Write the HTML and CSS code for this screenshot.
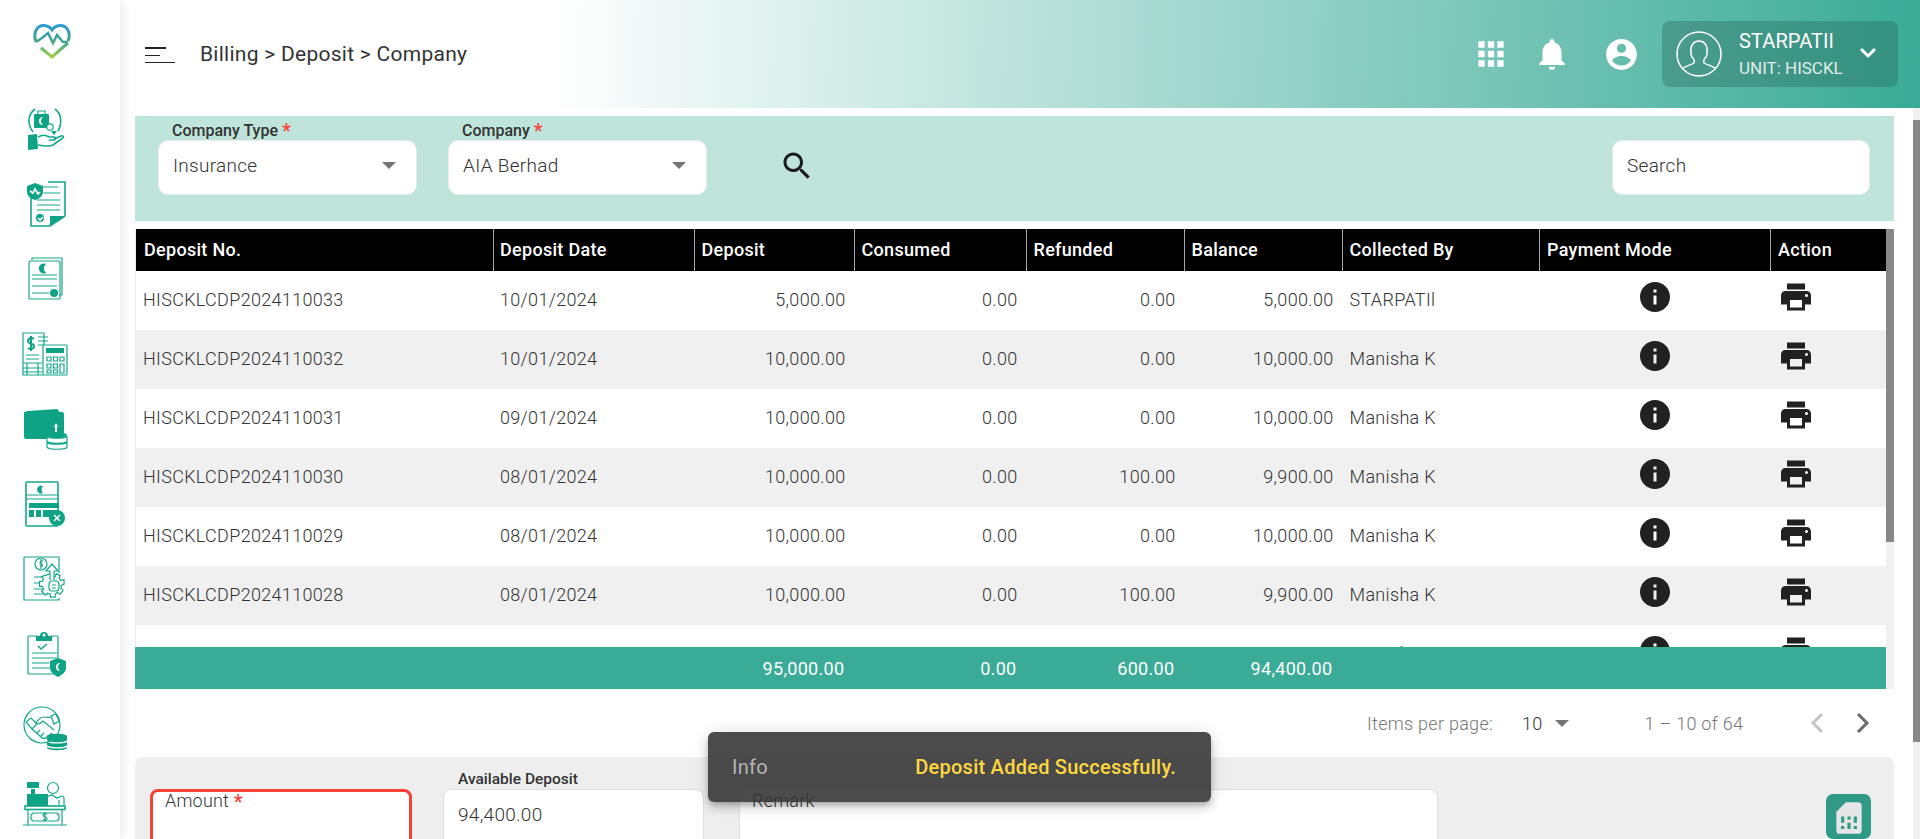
FILE: index.html
```html
<!DOCTYPE html>
<html lang="en">
<head>
<meta charset="utf-8">
<title>Billing - Deposit - Company</title>
<link rel="stylesheet" href="styles.css">
</head>
<body>
<div class="app">
  <aside class="sidebar">
    <div class="logo">
      <svg width="38" height="36" viewBox="0 0 38 36" fill="none">
        <defs><linearGradient id="lg" gradientUnits="userSpaceOnUse" x1="0" y1="0" x2="0" y2="34"><stop offset="0" stop-color="#2b9ad8"/><stop offset=".5" stop-color="#46a394"/><stop offset=".8" stop-color="#7fbf6a"/><stop offset="1" stop-color="#a8d13c"/></linearGradient></defs>
        <path d="M3 18C0 10 3 2 10 1.500C14 1.300 17 3 19 6C21 3 24 1.300 28 1.500C35 2 38 10 35 17" stroke="url(#lg)" stroke-width="3"/>
        <path d="M3 18L9 14L15 9L20 19L24 11L30 18H35" stroke="url(#lg)" stroke-width="2.6"/>
        <path d="M8 24L19 33L35 19" stroke="url(#lg)" stroke-width="3.2"/>
      </svg>
    </div>
    <nav class="nav">
      <a class="nav-item"><svg class="nav-icon" viewBox="0 0 46 46">
        <path class="ln th" d="M13 3C6 8 5 18 11 26M33 3C40 8 40 18 36 25"/>
        <rect class="fl" x="12" y="8" width="15" height="14" rx="1"/><path class="ln" d="M16 8V5h7v3"/>
        <path class="wt" d="M21 11a4 4 0 1 0 0 8a5 5 0 0 1 0-8z"/>
        <circle class="ln wfill" cx="28" cy="21" r="3.200"/><path class="fl" d="M29 25h6l-3 4z"/>
        <path class="fl" d="M6 29l9-1 1 15-10 1z"/>
        <path class="ln th" d="M16 31c5-3 8-2 11 0h5c2 0 2 3 0 3h-5M32 33l7-3c2-1 3 1 2 2l-10 7c-4 2-10 1-15 0"/>
      </svg></a>
      <a class="nav-item"><svg class="nav-icon" viewBox="0 0 46 46">
        <path class="ln th" d="M26 1h17v34M9 17v28h19l15-10"/>
        <path class="ln" d="M20 6h16M22 12h16M15 19h23M15 24h23M15 29h23"/>
        <circle class="fl" cx="18" cy="37" r="4"/><path class="wl" d="M16 37l2 2 3-3"/>
        <path class="fl" d="M28 45l15-10H28z"/>
        <path class="fl" d="M5 5l8-3 8 3v6c0 4-4 7-8 8-4-1-8-4-8-8z"/><path class="wl" d="M8 10l3 2 2-4 3 5 2-2"/>
      </svg></a>
      <a class="nav-item"><svg class="nav-icon" viewBox="0 0 46 46">
        <path class="ln" d="M10 4V2h30v37h-3"/><rect class="ln" x="7" y="5" width="31" height="38" rx="1"/>
        <path class="fl" d="M24 8a5 5 0 1 0 0 9a6 6 0 0 1 0-9z"/><path class="ln" d="M10 19h25M10 23h25M10 30h25M10 37h17"/>
        <circle class="fl" cx="32" cy="37" r="4"/>
      </svg></a>
      <a class="nav-item"><svg class="nav-icon" viewBox="0 0 46 46">
        <path class="ln" d="M1 30V2h21v12M1 30v14h20"/>
        <path class="fl2" d="M12 8c-2-2-6-1-6 2s6 2 6 5-4 4-6 2M9 5v15"/><path class="ln" d="M16 6h10M16 10h10M16 14h6M4 24h13M4 28h13M1 32h19M1 37h19M1 41h19M5 32v12M16 32v12"/>
        <rect class="ln wfill" x="21" y="14" width="24" height="30" rx="1"/><rect class="fl" x="24" y="17" width="18" height="5"/>
        <path class="ln" d="M25 26h4v4h-4zM31.500 26h4v4h-4zM38 26h4v4h-4zM25 33h4v4h-4zM31.500 33h4v4h-4zM25 39h4v3h-4zM31.500 39h4v3h-4zM38 33h4v9h-4z"/>
      </svg></a>
      <a class="nav-item"><svg class="nav-icon" viewBox="0 0 46 46">
        <path class="fl" d="M6 5l29-2 2 2v2H2c0-1 2-2 4-2z"/>
        <path class="fl" d="M2 6h38a2 2 0 0 1 2 2v26H25v-1H4a2 2 0 0 1-2-2z"/>
        <path class="wt" d="M34 17l2 4h-1v5h-2v-5h-1z"/>
        <ellipse class="fl" cx="35" cy="29" rx="10" ry="3"/>
        <path class="ln wfill" d="M25 30c1 3 19 3 20 0v5c-1 3-19 3-20 0zM25 36c1 3 19 3 20 0v5c-1 3-19 3-20 0z"/>
      </svg></a>
      <a class="nav-item"><svg class="nav-icon" viewBox="0 0 46 46">
        <rect class="ln th" x="4" y="1" width="32" height="44" rx="1"/>
        <path class="fl" d="M21 5a4 4 0 1 0 0 7a5 5 0 0 1 0-7z"/><path class="ln" d="M4 14h32M4 18h32"/>
        <path class="fl" d="M7 22h30v5H7zM7 29h5v7H7zM14 29h5v7h-5zM21 29h14v7H21z"/>
        <circle class="fl" cx="35" cy="37" r="8"/><path class="wl" d="M32 34l6 6M38 34l-6 6"/>
      </svg></a>
      <a class="nav-item"><svg class="nav-icon" viewBox="0 0 46 46">
        <path class="ln" d="M2 1h35v16M2 1v43h35v-2"/><circle class="ln" cx="19" cy="8" r="6"/><path class="ln" d="M21 5c-3-1-4 3-2 3s2 3-1 3M19 3v10"/>
        <path class="ln" d="M12 21h10M12 27h8M12 33h10M12 38h14"/>
        <path class="ln wfill" d="M33 18l2 3h3l1-3 4 2-1 3 2 2 3-1 0 5-3 1 0 3 2 2-3 4-3-2-2 2v3h-5v-3l-3-1-2 2-4-4 2-2-1-3h-3v-5h3l1-3-2-2z" transform="translate(-4 0) scale(.98)"/>
        <rect class="ln" x="27" y="25" width="10" height="10" rx="3"/><path class="ln" d="M30 29h4M30 32h4"/>
        <path class="ln wfill" d="M32 24v-9h4l-6-7-6 7h4v9"/>
      </svg></a>
      <a class="nav-item"><svg class="nav-icon" viewBox="0 0 46 46">
        <path class="ln" d="M16 5H7a1 1 0 0 0-1 1v36a1 1 0 0 0 1 1h30M29 5h6a1 1 0 0 1 1 1v22"/>
        <path class="fl" d="M14 5h4a4 4 0 0 1 8 0h4v5H14z"/><circle class="wt" cx="22" cy="4" r="1.500"/>
        <path class="ln th" d="M16 15l3 3 6-5"/><path class="ln" d="M10 22h25M10 27h25M10 32h17M10 37h18"/>
        <path class="fl" d="M36 27l8 3v7c0 4-4 7-8 9-4-2-8-5-8-9v-7z"/>
        <path class="wt" d="M38 32a4 4 0 1 0 0 8a5 5 0 0 1 0-8z"/>
      </svg></a>
      <a class="nav-item"><svg class="nav-icon" viewBox="0 0 46 46">
        <circle class="ln" cx="20" cy="19" r="18"/>
        <path class="ln" d="M4 16l5-4 6 6-5 5zM29 10l5-2 3 7-5 3z"/>
        <path class="ln" d="M29 11c-3 1-5 0-8 0-3 0-5 3-7 6 2 2 5 0 7-2l11 9"/>
        <path class="ln" d="M10 23l9 8c2 2 4 2 6 0l5-4M15 27l3-3M19 30l3-3"/>
        <path class="fl" d="M25 30c1-3 19-3 20 0v4c-1 3-19 3-20 0zM25 36c4 2 16 2 20 0v3c-1 3-19 3-20 0zM25 41c4 2 16 2 20 0v1c-1 3-19 3-20 0z"/>
      </svg></a>
      <a class="nav-item"><svg class="nav-icon" viewBox="0 0 46 46">
        <rect class="fl" x="5" y="1" width="12" height="6"/><rect class="fl" x="9" y="8" width="4" height="6"/><path class="fl" d="M5 13h21v12H5z"/>
        <circle class="ln" cx="31" cy="7" r="5.500"/>
        <path class="ln" d="M24 24v-8l6-2 5 3 5-2c2 0 2 1 2 3v6M37 19v5"/>
        <rect class="ln th" x="3" y="25" width="40" height="3.500"/>
        <path class="ln" d="M6 29v15M40 29v15M1 44h44"/>
        <path class="ln" d="M11 32h24l2 2v4l-2 2H11l-2-2v-4z"/>
        <path class="ln" d="M25 33c-2-1-4 0-4 1.500s4 1 4 3-3 2-4 1M23 31v9"/>
      </svg></a>
    </nav>
  </aside>

  <div class="main">
    <header class="header">
      <button class="menu-btn" aria-label="Menu"><span class="bar bar-a"></span><span class="bar bar-b"></span><span class="bar bar-c"></span></button>
      <div class="crumbs">Billing &gt; Deposit &gt; Company</div>
      <div class="header-tools">
        <svg class="tool tool-apps" viewBox="0 0 24 24"><path d="M4 8h4V4H4v4zm6 12h4v-4h-4v4zm-6 0h4v-4H4v4zm0-6h4v-4H4v4zm6 0h4v-4h-4v4zm6-10v4h4V4h-4zm-6 4h4V4h-4v4zm6 6h4v-4h-4v4zm0 6h4v-4h-4v4z"/></svg>
        <svg class="tool tool-bell" viewBox="0 0 24 24"><path d="M12 22c1.100 0 2-.9 2-2h-4c0 1.100.89 2 2 2zm6-6v-5c0-3.070-1.640-5.640-4.500-6.320V4c0-.83-.67-1.500-1.500-1.500s-1.500.67-1.500 1.500v.68C7.630 5.360 6 7.920 6 11v5l-2 2v1h16v-1l-2-2z"/></svg>
        <svg class="tool tool-user" viewBox="0 0 24 24"><path d="M12 2C6.480 2 2 6.480 2 12s4.480 10 10 10 10-4.480 10-10S17.520 2 12 2zm0 3c1.660 0 3 1.340 3 3s-1.340 3-3 3-3-1.340-3-3 1.340-3 3-3zm0 14.200c-2.500 0-4.710-1.280-6-3.220.03-1.990 4-3.080 6-3.080 1.990 0 5.970 1.090 6 3.080-1.290 1.940-3.500 3.220-6 3.220z"/></svg>
        <div class="user-box">
          <svg class="avatar" viewBox="0 0 46 46" fill="none"><circle cx="23" cy="23" r="22"/><path d="M6 38c3-3 9-4 12-6 1-2 0-3-1-5-2-1-2-3-2-5-1-8 3-12 8-12s9 4 8 12c0 2 0 4-2 5-1 2-2 3-1 5 3 2 9 3 12 6"/></svg>
          <div class="user-text"><div class="user-name">STARPATIl</div><div class="user-unit">UNIT: HISCKL</div></div>
          <svg class="chev" viewBox="0 0 18 12" fill="none"><path d="M2 2l7 7 7-7"/></svg>
        </div>
      </div>
    </header>

    <div class="body-row">
      <div class="page">
        <section class="filters">
          <div class="field field-select">
            <label class="float">Company Type <i>*</i></label>
            <span class="value">Insurance</span><span class="caret"></span>
          </div>
          <div class="field field-select">
            <label class="float">Company <i>*</i></label>
            <span class="value">AIA Berhad</span><span class="caret"></span>
          </div>
          <svg class="search-icon" viewBox="0 0 24 24"><path d="M15.500 14h-.79l-.28-.27C15.410 12.590 16 11.110 16 9.500 16 5.910 13.090 3 9.500 3S3 5.910 3 9.500 5.910 16 9.500 16c1.610 0 3.090-.59 4.230-1.570l.27.28v.79l5 4.990L20.490 19l-4.990-5zm-6 0C7.010 14 5 11.990 5 9.500S7.010 5 9.500 5 14 7.010 14 9.500 11.990 14 9.500 14z"/></svg>
          <div class="field field-search"><span class="value">Search</span></div>
        </section>

        <section class="table-wrap">
          <div class="table-col">
            <div class="rows">
              <div class="row head"><div>Deposit No.</div><div>Deposit Date</div><div>Deposit</div><div>Consumed</div><div>Refunded</div><div>Balance</div><div>Collected By</div><div>Payment Mode</div><div>Action</div></div>
              <div class="row"><div>HISCKLCDP2024110033</div><div>10/01/2024</div><div class="num">5,000.00</div><div class="num">0.00</div><div class="num">0.00</div><div class="num">5,000.00</div><div>STARPATIl</div><div class="ic-pay"><svg class="ic" viewBox="0 0 24 24"><path d="M12 2C6.480 2 2 6.480 2 12s4.480 10 10 10 10-4.480 10-10S17.520 2 12 2zm1 15h-2v-6h2v6zm0-8h-2V7h2v2z"/></svg></div><div class="ic-act"><svg class="ic" viewBox="0 0 24 24"><path d="M19 8H5c-1.660 0-3 1.340-3 3v6h4v4h12v-4h4v-6c0-1.660-1.340-3-3-3zm-3 11H8v-5h8v5zm3-7c-.55 0-1-.45-1-1s.45-1 1-1 1 .45 1 1-.45 1-1 1zm-1-9H6v4h12V3z"/></svg></div></div>
              <div class="row alt"><div>HISCKLCDP2024110032</div><div>10/01/2024</div><div class="num">10,000.00</div><div class="num">0.00</div><div class="num">0.00</div><div class="num">10,000.00</div><div>Manisha K</div><div class="ic-pay"><svg class="ic" viewBox="0 0 24 24"><path d="M12 2C6.480 2 2 6.480 2 12s4.480 10 10 10 10-4.480 10-10S17.520 2 12 2zm1 15h-2v-6h2v6zm0-8h-2V7h2v2z"/></svg></div><div class="ic-act"><svg class="ic" viewBox="0 0 24 24"><path d="M19 8H5c-1.660 0-3 1.340-3 3v6h4v4h12v-4h4v-6c0-1.660-1.340-3-3-3zm-3 11H8v-5h8v5zm3-7c-.55 0-1-.45-1-1s.45-1 1-1 1 .45 1 1-.45 1-1 1zm-1-9H6v4h12V3z"/></svg></div></div>
              <div class="row"><div>HISCKLCDP2024110031</div><div>09/01/2024</div><div class="num">10,000.00</div><div class="num">0.00</div><div class="num">0.00</div><div class="num">10,000.00</div><div>Manisha K</div><div class="ic-pay"><svg class="ic" viewBox="0 0 24 24"><path d="M12 2C6.480 2 2 6.480 2 12s4.480 10 10 10 10-4.480 10-10S17.520 2 12 2zm1 15h-2v-6h2v6zm0-8h-2V7h2v2z"/></svg></div><div class="ic-act"><svg class="ic" viewBox="0 0 24 24"><path d="M19 8H5c-1.660 0-3 1.340-3 3v6h4v4h12v-4h4v-6c0-1.660-1.340-3-3-3zm-3 11H8v-5h8v5zm3-7c-.55 0-1-.45-1-1s.45-1 1-1 1 .45 1 1-.45 1-1 1zm-1-9H6v4h12V3z"/></svg></div></div>
              <div class="row alt"><div>HISCKLCDP2024110030</div><div>08/01/2024</div><div class="num">10,000.00</div><div class="num">0.00</div><div class="num">100.00</div><div class="num">9,900.00</div><div>Manisha K</div><div class="ic-pay"><svg class="ic" viewBox="0 0 24 24"><path d="M12 2C6.480 2 2 6.480 2 12s4.480 10 10 10 10-4.480 10-10S17.520 2 12 2zm1 15h-2v-6h2v6zm0-8h-2V7h2v2z"/></svg></div><div class="ic-act"><svg class="ic" viewBox="0 0 24 24"><path d="M19 8H5c-1.660 0-3 1.340-3 3v6h4v4h12v-4h4v-6c0-1.660-1.340-3-3-3zm-3 11H8v-5h8v5zm3-7c-.55 0-1-.45-1-1s.45-1 1-1 1 .45 1 1-.45 1-1 1zm-1-9H6v4h12V3z"/></svg></div></div>
              <div class="row"><div>HISCKLCDP2024110029</div><div>08/01/2024</div><div class="num">10,000.00</div><div class="num">0.00</div><div class="num">0.00</div><div class="num">10,000.00</div><div>Manisha K</div><div class="ic-pay"><svg class="ic" viewBox="0 0 24 24"><path d="M12 2C6.480 2 2 6.480 2 12s4.480 10 10 10 10-4.480 10-10S17.520 2 12 2zm1 15h-2v-6h2v6zm0-8h-2V7h2v2z"/></svg></div><div class="ic-act"><svg class="ic" viewBox="0 0 24 24"><path d="M19 8H5c-1.660 0-3 1.340-3 3v6h4v4h12v-4h4v-6c0-1.660-1.340-3-3-3zm-3 11H8v-5h8v5zm3-7c-.55 0-1-.45-1-1s.45-1 1-1 1 .45 1 1-.45 1-1 1zm-1-9H6v4h12V3z"/></svg></div></div>
              <div class="row alt"><div>HISCKLCDP2024110028</div><div>08/01/2024</div><div class="num">10,000.00</div><div class="num">0.00</div><div class="num">100.00</div><div class="num">9,900.00</div><div>Manisha K</div><div class="ic-pay"><svg class="ic" viewBox="0 0 24 24"><path d="M12 2C6.480 2 2 6.480 2 12s4.480 10 10 10 10-4.480 10-10S17.520 2 12 2zm1 15h-2v-6h2v6zm0-8h-2V7h2v2z"/></svg></div><div class="ic-act"><svg class="ic" viewBox="0 0 24 24"><path d="M19 8H5c-1.660 0-3 1.340-3 3v6h4v4h12v-4h4v-6c0-1.660-1.340-3-3-3zm-3 11H8v-5h8v5zm3-7c-.55 0-1-.45-1-1s.45-1 1-1 1 .45 1 1-.45 1-1 1zm-1-9H6v4h12V3z"/></svg></div></div>
              <div class="row"><div></div><div></div><div></div><div></div><div></div><div></div><div>Manisha K</div><div class="ic-pay"><svg class="ic" viewBox="0 0 24 24"><path d="M12 2C6.480 2 2 6.480 2 12s4.480 10 10 10 10-4.480 10-10S17.520 2 12 2zm1 15h-2v-6h2v6zm0-8h-2V7h2v2z"/></svg></div><div class="ic-act"><svg class="ic" viewBox="0 0 24 24"><path d="M19 8H5c-1.660 0-3 1.340-3 3v6h4v4h12v-4h4v-6c0-1.660-1.340-3-3-3zm-3 11H8v-5h8v5zm3-7c-.55 0-1-.45-1-1s.45-1 1-1 1 .45 1 1-.45 1-1 1zm-1-9H6v4h12V3z"/></svg></div></div>
            </div>
            <div class="row foot"><div></div><div></div><div class="num">95,000.00</div><div class="num">0.00</div><div class="num">600.00</div><div class="num">94,400.00</div><div></div><div></div><div></div></div>
          </div>
          <div class="table-scroll"><span class="table-thumb"></span></div>
        </section>

        <div class="pager">
          <span class="pg-label">Items per page:</span>
          <span class="pg-size">10</span><span class="caret pg-caret"></span>
          <span class="pg-range">1 – 10 of 64</span>
          <svg class="pg-arrow pg-prev" viewBox="0 0 16 24" fill="none"><path d="M13 3l-9 9 9 9"/></svg>
          <svg class="pg-arrow pg-next" viewBox="0 0 16 24" fill="none"><path d="M3 3l9 9-9 9"/></svg>
        </div>

        <section class="entry">
          <div class="box box-amount"><span class="inner-label">Amount <i>*</i></span></div>
          <div class="box box-avail"><label class="float float-small">Available Deposit</label><span class="value">94,400.00</span></div>
          <div class="box box-remark"><span class="inner-label">Remark</span></div>
          <button class="save-btn" aria-label="Save"><svg viewBox="0 0 24 24"><path d="M19.990 4c0-1.100-.89-2-1.990-2h-8L4 8v12c0 1.100.9 2 2 2h12c1.100 0 2-.9 2-2l-.01-16zM9 19H7v-2h2v2zm8 0h-2v-2h2v2zm-8-4H7v-4h2v4zm4 4h-2v-4h2v4zm0-6h-2v-2h2v2zm4 2h-2v-4h2v4z"/></svg></button>
        </section>
      </div>
      <div class="page-scroll"><span class="page-thumb"></span></div>
    </div>
  </div>

  <div class="toast"><span class="toast-title">Info</span><span class="toast-msg">Deposit Added Successfully.</span></div>
</div>
</body>
</html>
```
FILE: styles.css
```css
* { box-sizing: border-box; }
html, body { margin: 0; height: 100%; overflow: hidden; background: #fff; }
body { font-family: Roboto, "Liberation Sans", sans-serif; color: #404040; }

.app { position: relative; display: flex; height: 839px; width: 1920px; overflow: hidden; }

/* sidebar */
.sidebar { width: 120px; flex: none; background: #fff; box-shadow: 3px 0 9px rgba(60, 60, 110, .09); z-index: 2; }
.logo { height: 91px; padding: 24px 0 0 33px; }
.logo svg { display: block; }
.nav { display: flex; flex-direction: column; }
.nav-item { display: flex; height: 75px; align-items: center; padding-left: 22px; }
.nav-icon { width: 46px; height: 46px; display: block; }
.ln { fill: none; stroke: #14a78b; stroke-width: 1.2; }
.th { stroke-width: 1.6; }
.fl { fill: #0fa386; stroke: none; }
.fl2 { fill: none; stroke: #0fa386; stroke-width: 2; }
.wt { fill: #fff; stroke: none; }
.wl { fill: none; stroke: #fff; stroke-width: 1.6; }
.wfill { fill: #fff; }

/* header */
.main { flex: 1; min-width: 0; display: flex; flex-direction: column; }
.header { height: 108px; flex: none; display: flex; align-items: center; padding: 0 22px 0 25px; background: linear-gradient(92deg, #fff 24%, #3aab96 100%); }
.menu-btn { display: flex; flex-direction: column; width: 30px; height: 18px; margin: 4px 0 0; padding: 0; border: 0; background: none; }
.bar { display: block; height: 1.5px; background: #222; }
.bar-a { width: 21px; }
.bar-b { width: 15px; margin-top: 6px; }
.bar-c { width: 30px; margin-top: 5.5px; }
.crumbs { margin-left: 25px; margin-bottom: 1px; font-size: 21px; color: #333; letter-spacing: .27px; }
.header-tools { margin-left: auto; display: flex; align-items: center; }
.tool { display: block; fill: #fff; }
.tool-apps { width: 38px; height: 38px; }
.tool-bell { width: 38px; height: 38px; margin-left: 23px; }
.tool-user { width: 37px; height: 37px; margin-left: 32px; }
.user-box { display: flex; align-items: center; width: 236px; height: 66px; margin-left: 22px; padding: 0 21px 0 14px; border-radius: 8px; background: rgba(30, 90, 78, .32); }
.avatar { width: 46px; height: 46px; flex: none; stroke: #fff; stroke-width: 1.5; }
.user-text { margin-left: 17px; }
.user-name { font-size: 20px; line-height: 24px; color: #fff; letter-spacing: .1px; }
.user-unit { font-size: 17px; line-height: 22px; margin-top: 4px; color: #e3ece9; }
.chev { width: 18px; height: 12px; margin-left: auto; margin-bottom: 3px; stroke: #fff; stroke-width: 3; }

/* page */
.body-row { flex: 1; min-height: 0; display: flex; }
.page { flex: 1; min-width: 0; padding: 8px 19px 0 15px; overflow: hidden; }
.page-scroll { width: 7px; flex: none; background: #f1f1f1; padding-top: 12px; }
.page-thumb { display: block; height: 622px; background: #888; }

.filters { display: flex; align-items: flex-start; height: 105px; padding: 24px 24px 0 23px; background: #bfe4dc; }
.field { position: relative; height: 55px; border: 1px solid #e6ece9; border-radius: 10px; background: #fff; display: flex; align-items: center; padding: 0 14px 5px; }
.field-select { width: 259px; margin-right: 31px; }
.field-select:nth-child(2) { margin-right: 0; }
.value { font-size: 19px; font-weight: 300; color: #333; letter-spacing: .28px; }
.float { position: absolute; left: 13px; top: -19px; font-size: 16px; line-height: 18px; font-weight: 500; color: #333; }
.float i, .inner-label i { font-style: normal; font-weight: 500; color: #f44336; font-size: 20px; line-height: 14px; vertical-align: -2px; }
.caret { width: 0; height: 0; border: 7px solid transparent; border-top-color: #757575; border-bottom: 0; }
.field-select .caret { margin-left: auto; margin-right: 6px; }
.search-icon { width: 36px; height: 36px; margin: 8px 0 0 72px; fill: #1c1c1c; flex: none; }
.field-search { width: 258px; margin-left: auto; }

/* table */
.table-wrap { display: flex; margin-top: 8px; height: 460px; }
.table-col { flex: 1; min-width: 0; display: flex; flex-direction: column; }
.rows { flex: 1; min-height: 0; overflow: hidden; border-left: 1px solid #ececec; }
.row { display: grid; grid-template-columns: 358px 200.500px 160px 172px 158px 158px 197.500px 231px 1fr; height: 59px; font-size: 18px; font-weight: 300; color: #333; background: #fff; letter-spacing: .32px; }
.row > div { display: flex; align-items: center; padding: 0 7px 2px; }
.row > div:nth-child(2) { padding-left: 6px; }
.row > .num { justify-content: flex-end; padding-right: 9px; }
.alt { background: #f0f0f0; }
.head { height: 42px; background: #000; color: #fff; font-weight: 500; letter-spacing: .3px; }
.head > div { border-right: 1px solid #a9a9a9; }
.head > div:first-child { padding-left: 8px; }
.head > div:last-child { border-right: 0; }
.foot { height: 42px; background: #3aab96; color: #fff; font-weight: 400; flex: none; }
.foot > div { padding-bottom: 0; }
.ic { width: 36px; height: 36px; fill: #212121; display: block; margin-bottom: 8px; }
.row > .ic-pay { justify-content: center; padding: 0; transform: translateX(-1px); }
.row > .ic-act { padding: 0 0 0 7px; }
.table-scroll { width: 8px; flex: none; background: #f0f0f0; }
.table-thumb { display: block; height: 313px; background: #888; }

/* pager */
.pager { display: flex; align-items: center; height: 68px; color: #757575; font-size: 18px; font-weight: 300; letter-spacing: .28px; }
.pg-label { margin-left: 1232px; }
.pg-size { margin-left: 29px; color: #333; }
.pg-caret { margin-left: 12px; }
.pg-range { margin-left: 76px; }
.pg-arrow { width: 16px; height: 24px; stroke-width: 3; }
.pg-prev { margin-left: 66px; stroke: #c4c4c4; }
.pg-next { margin-left: 30px; stroke: #6b6b6b; }

/* entry */
.entry { display: flex; align-items: flex-start; height: 180px; padding: 32px 0 0 15px; border-radius: 8px 8px 0 0; background: #eee; }
.box { position: relative; height: 120px; border-radius: 8px; background: #fff; border: 1px solid #dedede; }
.box-amount { width: 262px; border: 3px solid #f44336; margin-right: 31px; }
.box-avail { width: 261px; margin-right: 35px; padding: 13px 14px; }
.box-remark { width: 699px; }
.inner-label { position: absolute; left: 12px; top: 0; font-size: 18px; font-weight: 300; color: #333; letter-spacing: .2px; }
.box-amount .inner-label { top: -2px; }
.float-small { left: 14px; top: -20px; font-size: 15.500px; }
.save-btn { width: 45px; height: 45px; margin: 5px 23px 0 auto; padding: 3px 0 0; border: 0; border-radius: 7px; background: #2f9a85; }
.save-btn svg { display: block; width: 38px; height: 38px; margin: 0 auto; fill: #e6e6e6; }

/* toast */
.toast { position: absolute; left: 708px; top: 732px; width: 503px; height: 70px; display: flex; justify-content: space-between; align-items: center; padding: 0 35px 0 24px; border-radius: 6px; background: rgba(50, 50, 50, .88); box-shadow: 0 3px 5px -1px rgba(0,0,0,.2), 0 6px 10px rgba(0,0,0,.14), 0 1px 18px rgba(0,0,0,.12); z-index: 3; font-size: 20px; letter-spacing: .25px; }
.toast-title { color: #b5b5b5; }
.toast-msg { color: #ffd740; font-weight: 500; }
```
